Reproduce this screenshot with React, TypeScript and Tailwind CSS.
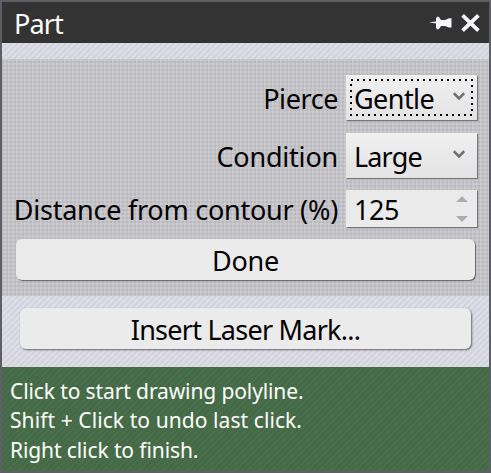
import React from "react";

const stripes =
  "bg-[linear-gradient(135deg,#dedee9_25%,#d3d3dd_25%_50%,#dedee9_50%_75%,#d3d3dd_75%)] bg-size-[6px_6px]";

function Label({ children, spacing = "tracking-[-0.42px]" }: { children: React.ReactNode; spacing?: string }) {
  return <span className={`whitespace-nowrap pt-[2px] text-[27px] leading-[34px] ${spacing}`}>{children}</span>;
}

type SelectProps = {
  label: string;
  value: string;
  labelSpacing?: string;
  valueSpacing?: string;
  focused?: boolean;
};

function Select({ label, value, labelSpacing, valueSpacing, focused = false }: SelectProps) {
  return (
    <div className="flex h-[45px] items-center justify-end gap-[8px]">
      <Label spacing={labelSpacing}>{label}</Label>
      <button className="relative flex h-[45px] w-[131px] items-center justify-between bg-linear-to-b from-[#f0f0f0] to-[#e3e3e3] pr-[12px] pl-[8px] shadow-[1px_1px_1px_#77777b]">
        <Label spacing={valueSpacing}>{value}</Label>
        <svg className="mb-[3px]" width="12" height="9" viewBox="0 0 12 9" fill="none">
          <path d="M0.8 1.2L6 6.4L11.2 1.2" stroke="#707070" strokeWidth="2.6" />
        </svg>
        {focused && (
          <svg className="absolute top-[4px] left-[4px]" width="124" height="38" fill="none">
            <rect x="1" y="1" width="121" height="35" stroke="#000" strokeWidth="2" strokeDasharray="2 4" />
          </svg>
        )}
      </button>
    </div>
  );
}

export default function App() {
  return (
    <main className="flex h-[473px] w-[491px] flex-col overflow-hidden border-2 border-[#5e5f66] font-['Noto_Sans','Open_Sans',sans-serif] text-black">
      <header className="flex h-[41px] shrink-0 items-center justify-between bg-[#333333] pr-[9px] pl-[12px] text-white">
        <Label spacing="tracking-[-0.9px]">Part</Label>
        <div className="flex items-center gap-[9px]">
          <svg width="23" height="14" viewBox="0 0 23 14" fill="#f5f5fa">
            <path d="M0 6.2L7 5.6V2L8.5 0.5L10 1L12 4H16L20 2.3H22.5V11.5H20L16 10H12L10 13L8.5 13.5L7 12V7.6Z" />
          </svg>
          <svg width="19" height="18" viewBox="0 0 19 18" stroke="#f5f5fa" strokeWidth="3.8">
            <path d="M1.6 1.4L17.4 16.6M17.4 1.4L1.6 16.6" />
          </svg>
        </div>
      </header>
      <div className={`h-[16px] shrink-0 ${stripes}`} />
      <section className="flex h-[237px] shrink-0 flex-col bg-[#cbcbd0] bg-[conic-gradient(#cbcbd0_25%,#c4c4c8_25%_50%,#b9b9bd_50%_75%,#c4c4c8_75%)] bg-size-[4px_4px] pt-[16px] pr-[12px] pl-[12px]">
        <Select label="Pierce" value="Gentle" valueSpacing="tracking-[-0.55px]" focused />
        <div className="h-[13px]" />
        <Select
          label="Condition"
          value="Large"
          labelSpacing="tracking-[-0.2px]"
          valueSpacing="tracking-[-0.85px]"
        />
        <div className="mt-[12px] flex h-[37px] items-center justify-end gap-[8px]">
          <Label spacing="tracking-[-0.25px]">Distance from contour (%)</Label>
          <div className="flex h-[37px] w-[131px] shrink-0 items-center justify-between bg-[#ebebeb] pr-[9px] pl-[8px] shadow-[1px_1px_1px_#77777b]">
            <Label>125</Label>
            <svg width="12" height="26" fill="#adadad">
              <path d="M0 6L6 0L12 6ZM0 20L6 26L12 20Z" />
            </svg>
          </div>
        </div>
        <button className="mt-[12px] mr-[2px] ml-[2px] flex h-[41px] items-center justify-center rounded-[6px] bg-[#ebebeb] shadow-[1px_1px_1px_#66666a]">
          <Label spacing="tracking-[-0.3px]">Done</Label>
        </button>
      </section>
      <section className={`h-[71px] shrink-0 px-[18px] pt-[12px] ${stripes}`}>
        <button className="flex h-[41px] w-[451px] items-center justify-center rounded-[6px] bg-[#ebebeb] shadow-[1px_1px_2px_#66666a]">
          <Label spacing="tracking-[-0.75px]">Insert Laser Mark...</Label>
        </button>
      </section>
      <footer className="flex-1 bg-[linear-gradient(135deg,#496f4a_25%,#456946_25%_50%,#496f4a_50%_75%,#456946_75%)] bg-size-[6px_6px] pt-[10px] pl-[8px] text-[21px] leading-[29.4px] text-white">
        <p className="tracking-[-0.11px]">Click to start drawing polyline.</p>
        <p className="tracking-[0.08px]">Shift + Click to undo last click.</p>
        <p className="tracking-[-0.1px]">Right click to finish.</p>
      </footer>
    </main>
  );
}
